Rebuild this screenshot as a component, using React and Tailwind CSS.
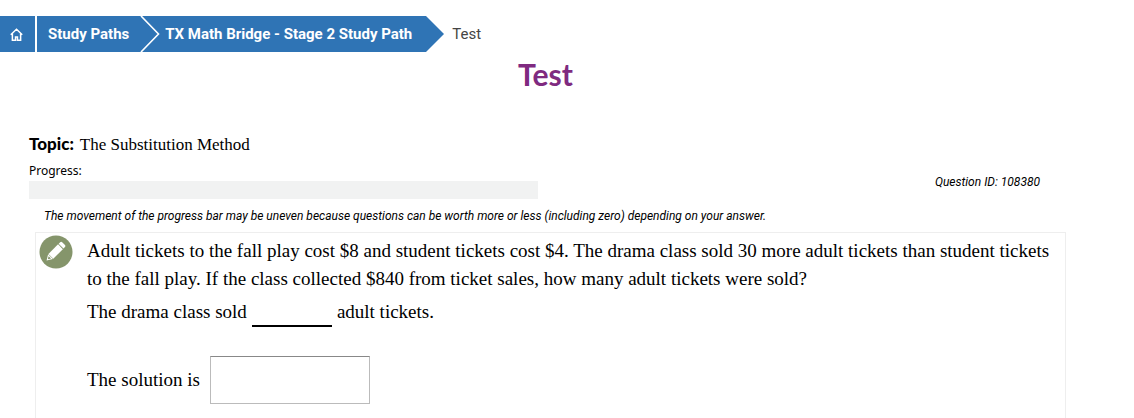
function Breadcrumb() {
  return (
    <nav aria-label="Breadcrumb" className="flex h-9 items-stretch whitespace-nowrap font-['Roboto',sans-serif] text-[15px] font-bold text-white">
      <a href="#home" aria-label="Home" className="mr-0.5 flex w-[35px] items-center justify-center bg-[#2f74b5] pr-0.5">
        <svg width="13" height="13" viewBox="0 0 12 12" fill="none" stroke="currentColor" strokeWidth="1.4" aria-hidden="true">
          <path d="M0.7 6.2 6 1.1l5.3 5.1M2.2 5.2v6.1h2.9V8.4h1.8v2.9h2.9V5.2" />
        </svg>
      </a>
      <a href="#study-paths" className="flex items-center bg-[#2f74b5] px-[11px]">Study Paths</a>
      <svg width="21" height="36" viewBox="0 0 21 36" className="shrink-0 bg-[#2f74b5]" aria-hidden="true">
        <path d="M1 0 18.5 18 1 36" fill="none" stroke="#fff" strokeWidth="1.6" />
      </svg>
      <a href="#stage-2" className="flex items-center bg-[#2f74b5] pl-1 pr-3.5">TX Math Bridge - Stage 2 Study Path</a>
      <svg width="18" height="36" viewBox="0 0 18 36" className="shrink-0" aria-hidden="true">
        <path d="M0 0 18 18 0 36Z" fill="#2f74b5" />
      </svg>
      <span aria-current="page" className="ml-2 flex items-center font-normal text-[#444]">Test</span>
    </nav>
  );
}

function PencilBadge() {
  return (
    <svg width="34" height="34" viewBox="0 0 34 34" className="shrink-0" aria-hidden="true">
      <circle cx="17" cy="17" r="16.5" fill="#85956b" />
      <g transform="translate(7.6 25.6) rotate(-45)" fill="#fff">
        <path d="M0 0 5.6-3.4V3.4Z" />
        <path d="M6-3.4H19.6V3.4H6Z" />
        <path d="M20.5-3.4H22.6Q24-3.4 24-2V2Q24 3.4 22.6 3.4H20.5Z" />
        <path d="M1.8 0 4.6-1.7V1.7Z" fill="#85956b" />
      </g>
    </svg>
  );
}

export default function App() {
  return (
    <main className="bg-white pt-4 font-['Liberation_Serif',serif] text-black">
      <Breadcrumb />
      <h1 className="mr-[43px] mt-1 text-center font-['Lato',sans-serif] text-[30px] font-bold leading-9 text-[#7f2a80]">Test</h1>

      <section className="ml-[29px] mr-[94px] mt-10">
        <p className="text-[17px] leading-6">
          <strong className="mr-0.5 font-['Lato',sans-serif] font-black">Topic:</strong> The Substitution Method
        </p>
        <div className="flex items-center justify-between">
          <div className="w-[509px]">
            <div id="progress-label" className="mt-1 font-['Noto_Sans',sans-serif] text-xs leading-5">Progress:</div>
            <div role="progressbar" aria-labelledby="progress-label" aria-valuenow={0} aria-valuemin={0} aria-valuemax={100} className="h-[18px] bg-[#f1f2f2]" />
          </div>
          <p className="mt-2 font-['Roboto',sans-serif] text-xs italic leading-4">Question ID: 108380</p>
        </div>
        <p className="ml-[15px] mt-[9px] font-['Roboto',sans-serif] text-xs italic leading-4">
          The movement of the progress bar may be uneven because questions can be worth more or less (including zero) depending on your answer.
        </p>
      </section>

      <section className="ml-[35px] mr-[68px] mt-2 flex items-start gap-3.5 border border-b-0 border-[#eee] pb-3.5 pl-[3px] pr-3 pt-0.5">
        <PencilBadge />
        <div className="text-[19px] leading-7">
          <p className="mt-0.5">
            Adult tickets to the fall play cost $8 and student tickets cost $4. The drama class sold 30 more adult tickets than student tickets to the fall play. If the class collected $840 from ticket sales, how many adult tickets were sold?
          </p>
          <p className="mt-[5px] flex">
            The drama class sold
            <span className="mx-[5px] h-[29px] w-20 border-b-2 border-black" />
            adult tickets.
          </p>
          <div className="mt-[29px] flex items-center gap-2.5">
            <label htmlFor="solution">The solution is</label>
            <input id="solution" type="text" className="h-12 w-40 border border-[#bbb] border-t-[#888] px-2 outline-none" />
          </div>
        </div>
      </section>
    </main>
  );
}
